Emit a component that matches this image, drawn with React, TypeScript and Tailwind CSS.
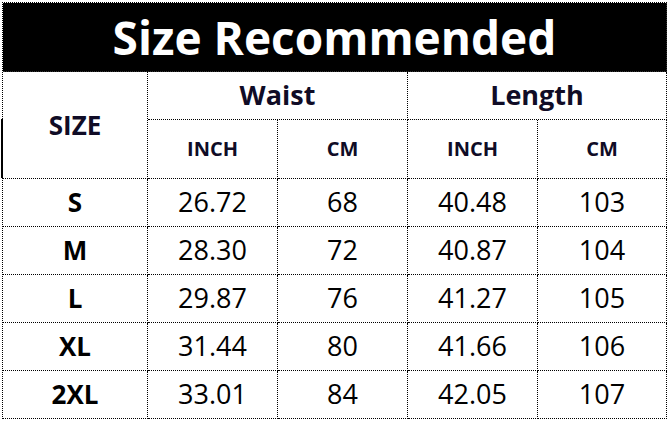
import React from "react";

const rows = [
  ["S", "26.72", "68", "40.48", "103"],
  ["M", "28.30", "72", "40.87", "104"],
  ["L", "29.87", "76", "41.27", "105"],
  ["XL", "31.44", "80", "41.66", "106"],
  ["2XL", "33.01", "84", "42.05", "107"],
];

const cell =
  "flex items-center justify-center border-r border-b border-dotted border-black";

export default function App() {
  return (
    <div
      className="w-[672px] h-[424px] bg-white pl-[2px] pt-[2px]"
      style={{ fontFamily: '"Open Sans", "Noto Sans", sans-serif' }}
    >
      <div className="relative grid w-fit grid-cols-[145px_130px_130px_130px_129px] grid-rows-[69px_48px_59px_48px_48px_48px_48px_48px] border-l border-t border-dotted border-black">
        <div className="col-span-5 flex items-center justify-center bg-black border-r border-b border-dotted border-[#333]">
          <span className="text-[46px] font-bold leading-none text-white">
            Size Recommended
          </span>
        </div>

        <div className={`${cell} row-span-2 text-[26px] font-bold text-[#100c26]`}>SIZE</div>
        <div className={`${cell} col-span-2 text-[27px] font-bold text-[#100c26]`}>Waist</div>
        <div className={`${cell} col-span-2 text-[27px] font-bold text-[#100c26]`}>Length</div>

        <div className={`${cell} text-[20px] font-bold text-[#100c26]`}>INCH</div>
        <div className={`${cell} text-[20px] font-bold text-[#100c26]`}>CM</div>
        <div className={`${cell} text-[20px] font-bold text-[#100c26]`}>INCH</div>
        <div className={`${cell} text-[20px] font-bold text-[#100c26]`}>CM</div>

        {rows.map((r) => (
          <React.Fragment key={r[0]}>
            <div className={`${cell} text-[26px] font-bold text-black`}>{r[0]}</div>
            {r.slice(1).map((v, i) => (
              <div key={i} className={`${cell} text-[27px] text-black`}>
                {v}
              </div>
            ))}
          </React.Fragment>
        ))}

        <div className="absolute left-[-2px] top-[116px] h-[59px] w-[2px] bg-black" />
      </div>
    </div>
  );
}
